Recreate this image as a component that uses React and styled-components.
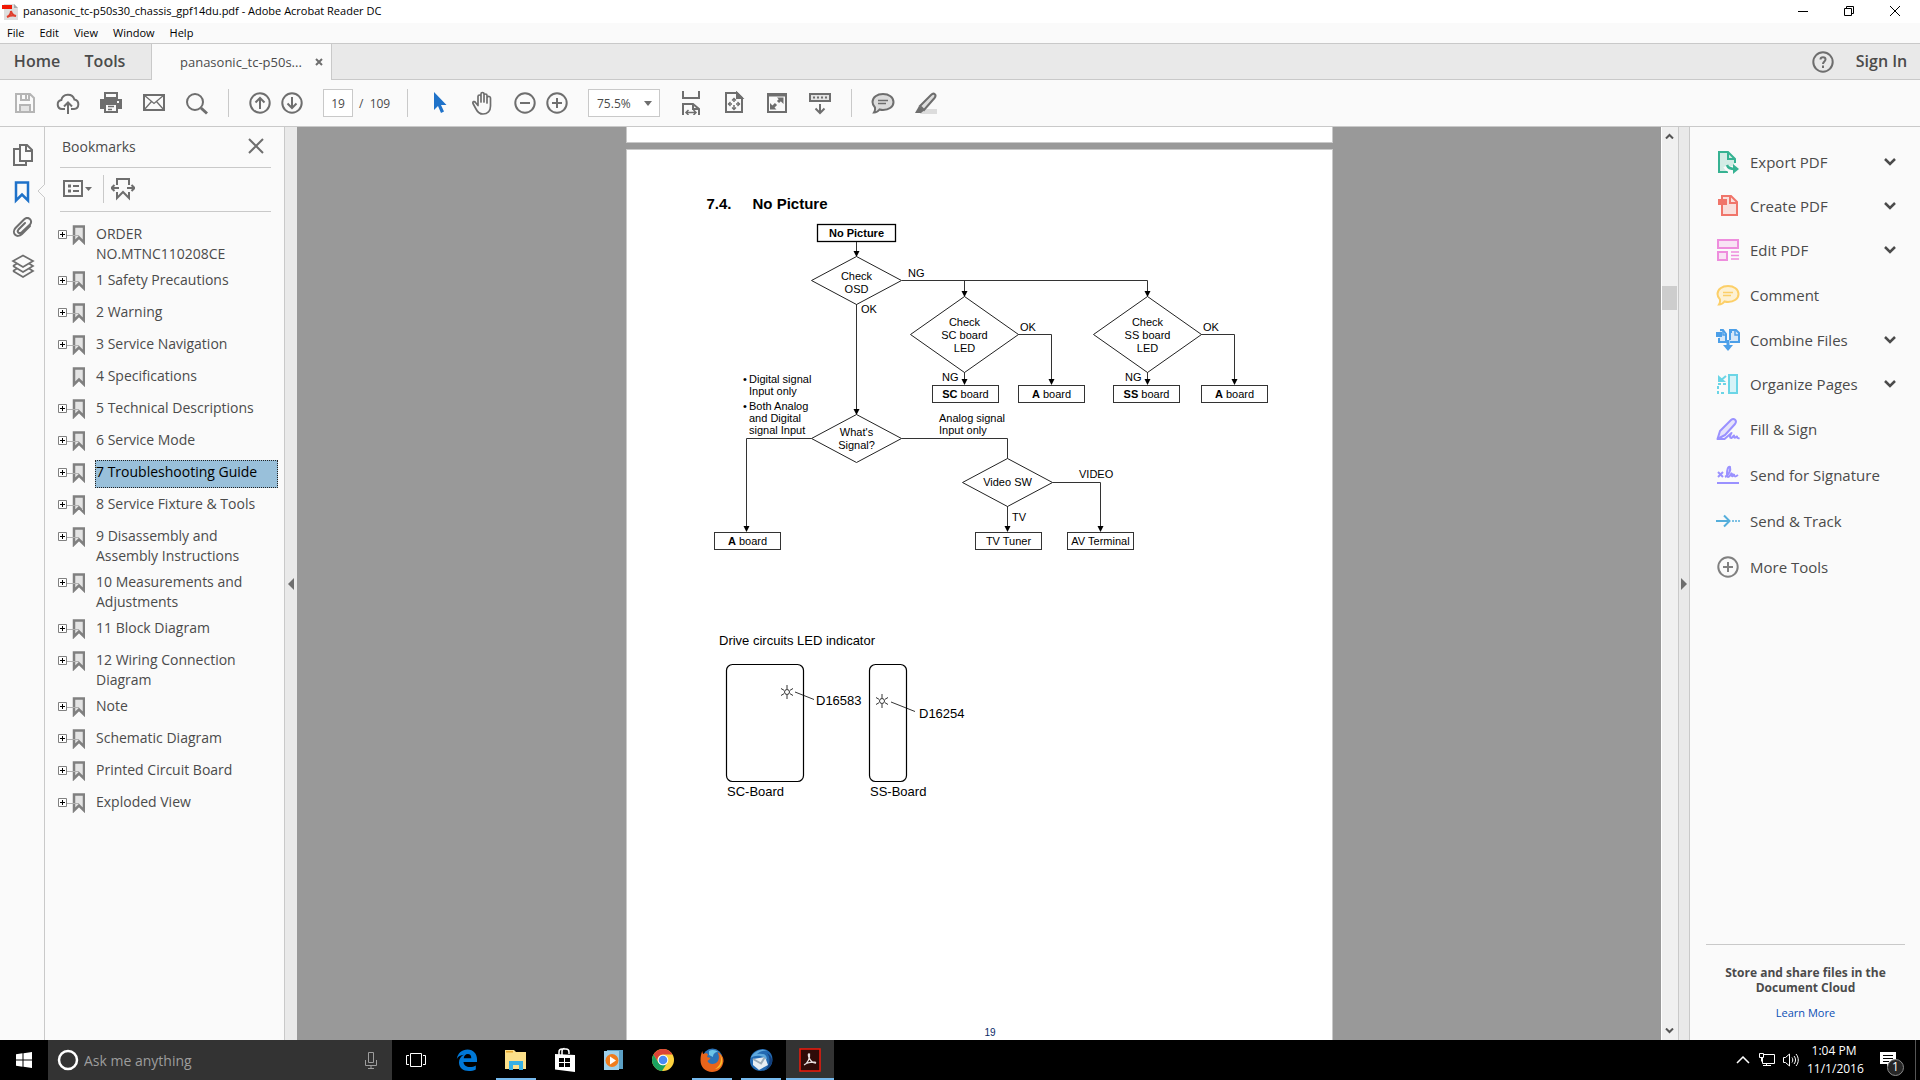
import React from 'react';
import styled, { createGlobalStyle } from 'styled-components';

const GlobalStyle = createGlobalStyle`
  * {
    box-sizing: border-box;
  }

  body {
    margin: 0;
    font-family: 'Open Sans', 'Noto Sans', sans-serif;
    font-size: 14px;
    color: #4b4b4b;
    background: #fafafa;
  }

  button, input, select {
    font-family: inherit;
    color: inherit;
  }

  svg {
    display: block;
    flex: none;
  }
`;

const Window = styled.div`
  display: flex;
  flex-direction: column;
  height: 100vh;
  overflow: hidden;
`;

/* title bar and menu */

const TitleBar = styled.header`
  display: flex;
  align-items: center;
  flex: none;
  height: 23px;
  padding: 0 2px;
  background: #fff;
  color: #000;
`;

const WindowTitle = styled.h1`
  flex: 1;
  margin: 0 0 2px 5px;
  font-size: 11px;
  font-weight: 400;
  line-height: 20px;
`;

const WindowButton = styled.button`
  display: flex;
  align-items: center;
  justify-content: center;
  width: 46px;
  height: 22px;
  padding: 0 0 2px;
  border: 0;
  background: none;
`;

const MenuBar = styled.nav`
  display: flex;
  align-items: flex-start;
  flex: none;
  gap: 15px;
  height: 20px;
  padding-left: 7px;
`;

const MenuItem = styled.button`
  padding: 0;
  border: 0;
  background: none;
  color: #000;
  font-size: 11px;
  line-height: 19px;
`;

/* tabs */

const TabBar = styled.div`
  display: flex;
  flex: none;
  height: 37px;
  background: #e9e9e9;
  border-top: 1px solid #c9c9c9;
  border-bottom: 1px solid #c9c9c9;
`;

const TabLink = styled.button`
  width: ${(props) => props.$width}px;
  padding: 0 0 2px;
  border: 0;
  background: none;
  font-size: 16px;
  font-weight: 600;
`;

const OpenTab = styled.div`
  display: flex;
  align-items: center;
  justify-content: space-between;
  width: 181px;
  height: 36px;
  margin-left: 15px;
  padding: 0 8px 1px 28px;
  background: #fafafa;
  border: solid #c9c9c9;
  border-width: 0 1px;
  font-size: 13px;
`;

const PlainButton = styled.button`
  display: flex;
  align-items: center;
  justify-content: center;
  width: ${(props) => props.$size || 24}px;
  height: ${(props) => props.$size || 24}px;
  padding: 0;
  border: 0;
  background: none;
  position: relative;
`;

const TabEnd = styled.div`
  display: flex;
  align-items: center;
  gap: 14px;
  margin-left: auto;
  padding-right: 6px;
`;

/* toolbar */

const Toolbar = styled.div`
  display: flex;
  align-items: center;
  flex: none;
  gap: 19px;
  height: 47px;
  padding-left: 13px;
  border-bottom: 1px solid #c9c9c9;
`;

const Pair = styled.div`
  display: flex;
  align-items: center;
  gap: 8px;
`;

const Separator = styled.span`
  width: 1px;
  height: 28px;
  background: #c9c9c9;
`;

const PageBox = styled.label`
  display: flex;
  align-items: center;
  gap: 6px;
  width: 65px;
  font-size: 12px;
  white-space: pre;
`;

const PageInput = styled.input`
  width: 30px;
  height: 28px;
  padding: 0;
  border: 1px solid #c9c9c9;
  background: #fff;
  font-size: 12px;
  text-align: center;
`;

const ZoomBox = styled.div`
  position: relative;

  svg {
    position: absolute;
    right: 8px;
    top: 12px;
    pointer-events: none;
  }
`;

const ZoomSelect = styled.select`
  display: block;
  width: 72px;
  height: 28px;
  padding: 0 8px;
  border: 1px solid #c9c9c9;
  border-radius: 0;
  background: #fff;
  font-size: 12px;
  appearance: none;
`;

/* left side */

const Workspace = styled.div`
  display: flex;
  flex: 1;
  min-height: 0;
`;

const Rail = styled.nav`
  display: flex;
  flex-direction: column;
  align-items: center;
  gap: 13px;
  flex: none;
  width: 45px;
  padding-top: 16px;
  padding-left: 2px;
  border-right: 1px solid #c9c9c9;
`;

const RailButton = styled(PlainButton)`
  svg.notch {
    position: absolute;
    left: 26px;
    top: 3px;
  }
`;

const BookmarkPanel = styled.aside`
  flex: none;
  width: 240px;
  border-right: 1px solid #c9c9c9;
`;

const PanelHeader = styled.div`
  display: flex;
  align-items: center;
  justify-content: space-between;
  height: 41px;
  margin: 0 13px 0 15px;
  padding: 0 3px 2px 2px;
  border-bottom: 1px solid #c9c9c9;
`;

const PanelTitle = styled.h2`
  margin: 0;
  font-size: 14px;
  font-weight: 400;
`;

const PanelTools = styled.div`
  display: flex;
  align-items: center;
  gap: 7px;
  height: 44px;
  margin: 0 13px 0 15px;
  padding: 0 0 1px 3px;
  border-bottom: 1px solid #c9c9c9;
`;

const OptionsButton = styled(PlainButton)`
  justify-content: flex-start;
  width: 33px;
`;

const Tree = styled.ul`
  margin: 0;
  padding: 10px 6px 0 13px;
  list-style: none;
`;

const TreeItem = styled.li`
  display: flex;
  align-items: flex-start;
  margin-bottom: 4px;
`;

const Expander = styled.button`
  width: 37px;
  padding: 3px 0 0;
  border: 0;
  background: none;
`;

const TreeLabel = styled.a`
  width: 183px;
  min-height: 28px;
  padding: 2px 0 0 1px;
  line-height: 20px;
  white-space: pre-line;
  text-decoration: none;
  color: ${(props) => (props.$selected ? '#000' : '#4b4b4b')};
  background: ${(props) => (props.$selected ? '#99c0da' : 'none')};
  outline: ${(props) => (props.$selected ? '1px dotted #222' : 'none')};
  outline-offset: -1px;
`;

const Splitter = styled.button`
  display: flex;
  align-items: center;
  justify-content: center;
  flex: none;
  width: ${(props) => (props.$bordered ? 11 : 12)}px;
  padding: 0;
  border: 0;
  border-right: ${(props) => (props.$bordered ? '1px solid #c9c9c9' : '0')};
  background: #e9e9e9;
`;

/* document */

const DocumentArea = styled.main`
  display: flex;
  flex: 1;
  flex-direction: column;
  align-items: center;
  gap: 6px;
  min-width: 0;
  overflow: hidden;
  background: #999;
`;

const PageEnd = styled.div`
  flex: none;
  width: 707px;
  height: 16px;
  background: #fff;
  border: solid #c9c9c9;
  border-width: 0 1px 1px;
`;

const Page = styled.article`
  display: flex;
  flex: 1;
  flex-direction: column;
  width: 707px;
  padding-left: 74px;
  background: #fff;
  border: solid #c9c9c9;
  border-width: 1px 1px 0;
  color: #000;
  font-family: 'Liberation Sans', Arial, sans-serif;
`;

const SectionTitle = styled.h2`
  display: flex;
  gap: 21px;
  margin: 44px 0 6px 6px;
  font-size: 15px;
  font-weight: 700;
  line-height: 20px;
`;

const Figures = styled.div`
  display: flex;
  flex-direction: column;
  gap: 60px;
`;

const PageNumber = styled.footer`
  margin: auto 52px 0 0;
  text-align: center;
  font-size: 10px;
  line-height: 14px;
  color: #0a2a66;
`;

const ScrollBar = styled.div`
  display: flex;
  flex-direction: column;
  flex: none;
  width: 18px;
  padding-right: 1px;
  border-left: 1px solid #fff;
  border-right: 1px solid #c9c9c9;
  background: #f0f0f0;
`;

const ScrollArrow = styled(PlainButton)`
  width: 15px;
  height: 18px;
`;

const ScrollGap = styled.div`
  flex: ${(props) => props.$grow};
`;

const ScrollThumb = styled.div`
  height: 24px;
  background: #cdcdcd;
`;

/* tools panel */

const ToolsPanel = styled.aside`
  display: flex;
  flex-direction: column;
  flex: none;
  width: 230px;
  padding-top: 13px;
`;

const ToolRow = styled.button`
  display: flex;
  align-items: center;
  gap: 10px;
  height: ${(props) => (props.$menu ? 44 : 46)}px;
  padding: 0 23px 0 26px;
  border: 0;
  background: none;
  font-size: 15px;
  text-align: left;
`;

const ToolName = styled.span`
  flex: 1;
`;

const CloudPromo = styled.div`
  margin: auto 15px 0 16px;
  padding: 20px 0 20px;
  border-top: 1px solid #c9c9c9;
  text-align: center;
  font-size: 12px;
  font-weight: 700;
  line-height: 15px;
`;

const PromoLink = styled.a`
  display: block;
  margin-top: 10px;
  font-size: 11px;
  font-weight: 400;
  color: #0a4fb4;
  text-decoration: none;
`;

/* taskbar */

const Taskbar = styled.footer`
  display: flex;
  flex: none;
  height: 40px;
  background: #000;
  color: #fff;
`;

const TaskButton = styled.button`
  display: flex;
  align-items: center;
  justify-content: center;
  width: 48px;
  margin-right: ${(props) => props.$after || 0}px;
  padding: 0;
  border: 0;
  background: ${(props) => (props.$active ? '#333' : 'none')};
  position: relative;

  &::after {
    content: '';
    position: absolute;
    bottom: 0;
    left: ${(props) => (props.$active ? 0 : 4)}px;
    right: ${(props) => (props.$active ? 0 : 4)}px;
    height: 2px;
    background: ${(props) => (props.$open ? '#76b9ed' : 'none')};
  }
`;

const SearchBox = styled.label`
  display: flex;
  align-items: center;
  gap: 5px;
  width: 344px;
  padding: 0 15px 0 9px;
  background: #333;
`;

const SearchInput = styled.input`
  flex: 1;
  min-width: 0;
  padding: 0;
  border: 0;
  background: none;
  font-size: 14px;

  &::placeholder {
    color: #9d9d9d;
    opacity: 1;
  }
`;

const Tray = styled.div`
  display: flex;
  align-items: center;
  margin-left: auto;
`;

const Clock = styled.time`
  width: 54px;
  margin-left: 4px;
  text-align: center;
  white-space: nowrap;
  font-size: 12px;
  line-height: 18px;
`;

const NotifyButton = styled(PlainButton)`
  width: 54px;
  height: 40px;
`;

const NotifyBadge = styled.span`
  position: absolute;
  left: 26px;
  top: 19px;
  width: 17px;
  height: 17px;
  border: 1px solid #8a8a8a;
  border-radius: 50%;
  background: #262626;
  color: #fff;
  font-size: 12px;
  line-height: 14px;
`;

const ShowDesktop = styled.span`
  align-self: stretch;
  width: 5px;
  border-left: 1px solid #555;
`;

const Icon = ({ w = 24, h = 24, children, ...rest }) => (
  <svg width={w} height={h} viewBox={`0 0 ${w} ${h}`} fill="none" stroke="#6e6e6e" strokeWidth="2" aria-hidden="true" {...rest}>
    {children}
  </svg>
);

const SaveIcon = () => (
  <Icon stroke="#b5b5b5">
    <path d="M3 3h14l4 4v14H3zM8 3v6h8V3M7 21v-7h10v7" />
    <path d="M13 4v4" />
    <path d="M8 15h8v5H8z" fill="#e4e4e4" stroke="none" />
  </Icon>
);

const CloudIcon = () => (
  <Icon>
    <path d="M9 18H6a4.500 4.500 0 0 1-.7-8.900A6.800 6.800 0 0 1 18.400 8.500 4.800 4.800 0 0 1 18 18h-3M12 23V12M8 15.500l4-4 4 4" />
  </Icon>
);

const PrintIcon = () => (
  <Icon>
    <path d="M5 1h14v7H5z" fill="#6e6e6e" stroke="none" />
    <path d="M7 3h10v3H7z" fill="#fafafa" stroke="none" />
    <path d="M1 8h22v10H1z" fill="#6e6e6e" stroke="none" />
    <path d="M18 11h2" stroke="#fafafa" />
    <path d="M6 13h12v8H6z" fill="#fafafa" />
    <path d="M9 15.500h6M9 18.500h4" strokeWidth="1.500" />
  </Icon>
);

const MailIcon = () => (
  <Icon>
    <path d="M2 4h20v15H2z" />
    <path d="M2 4l10 8.500L22 4M2 19l7.500-8.500M22 19l-7.500-8.500" strokeWidth="1.300" />
  </Icon>
);

const SearchIcon = () => (
  <Icon>
    <circle cx="10" cy="11" r="8" />
    <path d="M16 17l6 5.500" strokeWidth="3" />
  </Icon>
);

const CircleIcon = ({ d, ...rest }) => (
  <Icon {...rest}>
    <circle cx="12" cy="12" r="9.700" />
    <path d={d} />
  </Icon>
);

const PointerIcon = () => (
  <Icon stroke="none" fill="#1f72c9">
    <path d="M7 1v18l4-4 3 7 3-1.500-3-6.500h5.500z" />
  </Icon>
);

const HandIcon = () => (
  <Icon strokeWidth="1.700" strokeLinecap="round" strokeLinejoin="round">
    <path d="M8 12V5.500a1.500 1.500 0 0 1 3 0V3a1.500 1.500 0 0 1 3 0v1.500a1.500 1.500 0 0 1 3 0V7a1.500 1.500 0 0 1 3.500.5V15c0 5-3 8-7.500 8-4 0-5.500-2-7-5l-3-5.500c-.8-1.800 1.500-2.800 2.500-1L8 14.500zM11 5v6M14 5v6M17 6v6" />
  </Icon>
);

const FitWidthIcon = () => (
  <Icon>
    <path d="M4 0v7h16V0M4 24V13h10l6 5v6" />
    <path d="M14 13v5h6" />
    <path d="M7 21.500h10M9.500 19L7 21.500 9.500 24M14.500 19l2.500 2.500-2.500 2.500" strokeWidth="1.500" />
  </Icon>
);

const FitPageIcon = () => (
  <Icon>
    <path d="M4 2h11l5 5v14H4z" />
    <path d="M15 2v5h5z" fill="#6e6e6e" />
    <path d="M12 8v3M12 14v4M6.500 13H10M14 13h3.500" strokeWidth="1.500" />
    <path d="M10 9.500l2-2 2 2M10 16.500l2 2 2-2M8.500 11l-2 2 2 2M15.500 11l2 2-2 2" strokeWidth="1.300" />
  </Icon>
);

const FullScreenIcon = () => (
  <Icon>
    <path d="M3 3h18v18H3z" />
    <path d="M3 4h18" strokeWidth="3" />
    <path d="M8 16l3-3M13 11l3-3" strokeWidth="3" />
    <path d="M12 6.500h6.500V13zM5 12v6.500h6.500z" fill="#6e6e6e" stroke="none" />
  </Icon>
);

const KeyboardIcon = () => (
  <Icon>
    <path d="M2 3h20v7H2z" fill="#e4e4e4" />
    <path d="M5 6.500h14" strokeDasharray="2 2" />
    <path d="M12 13v9M7.500 17.500L12 22l4.500-4.500" />
  </Icon>
);

const CommentIcon = ({ color = '#6e6e6e', fill = '#dcdcdc' }) => (
  <Icon stroke={color}>
    <path d="M12 3c6 0 10.500 3.300 10.500 8S18 19 12 19c-1.500 0-2.500-.2-3.500-.5C7 20.500 5 21.500 3 21.500c1-1.500 1.300-3.500 1-5C2.500 15 1.500 13 1.500 11 1.500 6.300 6 3 12 3z" fill={fill} />
    <path d="M7 9.500h10M7 12.500h8" strokeWidth="1.300" />
  </Icon>
);

const HighlightIcon = () => (
  <Icon>
    <path d="M8 18h15v5H6z" fill="#dcdcdc" stroke="none" />
    <path d="M6 15L17 4c3-3 6 0 3.500 3L10 19z" fill="#dcdcdc" />
    <path d="M5 15l5 4.500L7 22H1z" fill="#6e6e6e" stroke="none" />
  </Icon>
);

const Caret = (props) => (
  <svg width="8" height="5" viewBox="0 0 8 5" aria-hidden="true" {...props}>
    <path d="M0 0h8L4 5z" fill="#6e6e6e" />
  </svg>
);

const CrossIcon = ({ size, width, color = '#6e6e6e' }) => (
  <Icon w={size} h={size} stroke={color} strokeWidth={width}>
    <path d={`M1 1L${size - 1} ${size - 1}M${size - 1} 1L1 ${size - 1}`} />
  </Icon>
);

const TreeIcon = ({ expandable }) => (
  <Icon w={27} h={20}>
    <path d="M16 1.500h10v16l-5-5-5 5z" fill="#e4e4e4" stroke="#808080" strokeWidth="2.500" />
    {expandable && (
      <>
        <path d="M9 10.500h12" stroke="#b0b0b0" strokeWidth="1" />
        <path d="M.5 5.500h8v8h-8z" fill="#fff" stroke="#808080" strokeWidth="1" />
        <path d="M2 9.500h5M4.500 7v5" stroke="#000" strokeWidth="1" />
      </>
    )}
  </Icon>
);

const TOOLS = [
  {
    name: 'Export PDF',
    menu: true,
    icon: (
      <Icon stroke="#36b292">
        <path d="M12 22H3V2h9l7 7v4" fill="#d3ece5" />
        <path d="M12 2v7h7" />
        <path d="M10 16c2 4 5 3 9 3" stroke="#fafafa" strokeWidth="6" />
        <path d="M11 15c1 3 4 4 8 4" strokeWidth="2.500" />
        <path d="M17 14l6 5-6 5z" fill="#36b292" stroke="none" />
      </Icon>
    ),
  },
  {
    name: 'Create PDF',
    menu: true,
    icon: (
      <Icon stroke="#f0756a">
        <path d="M6 2h9l6 6v13H6z" fill="#f9dfdc" />
        <path d="M14 2v7h7" />
        <path d="M2 5h9v6H2z" fill="#f0756a" stroke="none" />
      </Icon>
    ),
  },
  {
    name: 'Edit PDF',
    menu: true,
    icon: (
      <Icon stroke="#ee8ddd">
        <path d="M2 2h20v8H2zM2 14h9v8H2z" fill="#f8e3f4" />
        <path d="M15 14h8M15 17.500h8M15 21h8" strokeWidth="1.300" />
      </Icon>
    ),
  },
  { name: 'Comment', icon: <CommentIcon color="#fccf68" fill="#fdf1d3" /> },
  {
    name: 'Combine Files',
    menu: true,
    icon: (
      <Icon stroke="#4c9fe8">
        <path d="M3 10v4h7V6L7 2H4M14 14h9V5l-3-3h-6v10" fill="#d5e7f8" />
        <path d="M19 2v5h4M7 2v5h3" strokeWidth="1.500" />
        <path d="M0 4h6v5H0zM13 1h3v4h-3z" fill="#4c9fe8" stroke="none" />
        <path d="M12 12v9" strokeWidth="3" />
        <path d="M7 17h10l-5 6z" fill="#4c9fe8" stroke="none" />
      </Icon>
    ),
  },
  {
    name: 'Organize Pages',
    menu: true,
    icon: (
      <Icon stroke="#6bd5e6">
        <path d="M13 3h8v18h-8z" fill="#d6f3f8" />
        <path d="M10 12H2v9h8" strokeDasharray="3 2" />
        <path d="M10 4L4 9" />
        <path d="M2 3v7h8z" fill="#6bd5e6" stroke="none" />
      </Icon>
    ),
  },
  {
    name: 'Fill & Sign',
    icon: (
      <Icon stroke="#9a91ff" strokeLinejoin="round">
        <path d="M1.500 22L4 14 15 3c3-2.500 6.500.5 4 4L9 18z" fill="#e6e3fb" />
        <path d="M1.500 22h7l7-6c-2 3-2 5 0 5l2.500-2.500c-.5 2 .5 3 2 1.500l1-.5c0 1.500 1 2 2.500 1.500" />
      </Icon>
    ),
  },
  {
    name: 'Send for Signature',
    icon: (
      <Icon stroke="#9a91ff">
        <path d="M1 20h22M2 9l5 5M7 9l-5 5" />
        <path d="M9 14c4-2 6-7 5-10-2-1-3 3-3 7s2 4 4 0l1-1c-1 3 0 5 2 1 0 3 1 3 4 1" />
      </Icon>
    ),
  },
  {
    name: 'Send & Track',
    icon: (
      <Icon stroke="#55aedb">
        <path d="M0 12h12M8 6.500l5.500 5.500L8 17.500" />
        <path d="M16 12h8" strokeDasharray="2 1" strokeWidth="1.500" />
      </Icon>
    ),
  },
  { name: 'More Tools', icon: <CircleIcon d="M12 7v10M7 12h10" stroke="#808080" /> },
];

const BOOKMARKS = [
  { title: 'ORDER\nNO.MTNC110208CE' },
  { title: '1 Safety Precautions' },
  { title: '2 Warning' },
  { title: '3 Service Navigation' },
  { title: '4 Specifications', leaf: true },
  { title: '5 Technical Descriptions' },
  { title: '6 Service Mode' },
  { title: '7 Troubleshooting Guide', selected: true },
  { title: '8 Service Fixture & Tools' },
  { title: '9 Disassembly and\nAssembly Instructions' },
  { title: '10 Measurements and\nAdjustments' },
  { title: '11 Block Diagram' },
  { title: '12 Wiring Connection\nDiagram' },
  { title: 'Note' },
  { title: 'Schematic Diagram' },
  { title: 'Printed Circuit Board' },
  { title: 'Exploded View' },
];

// flowchart parts

const Box = ({ x, y, w = 66, bold, children, heavy }) => (
  <>
    <rect x={x} y={y} width={w} height="17" fill="none" stroke={heavy ? '#000' : '#333'} strokeWidth={heavy ? 1.3 : 1} />
    <text x={x + w / 2} y={y + 12.5} textAnchor="middle">
      {bold && <tspan fontWeight="700">{bold}</tspan>}
      {children}
    </text>
  </>
);

const Diamond = ({ cx, cy, rx, ry, lines, first }) => (
  <>
    <path d={`M${cx - rx} ${cy}L${cx} ${cy - ry}L${cx + rx} ${cy}L${cx} ${cy + ry}z`} fill="none" stroke="#222" />
    {lines.map((line, i) => (
      <text key={line} x={cx} y={first + i * 13} textAnchor="middle">{line}</text>
    ))}
  </>
);

const Arrow = ({ d, x, y }) => (
  <>
    <path d={d} fill="none" stroke="#333" />
    <path d={`M${x - 3} ${y - 6}h6l-3 6z`} />
  </>
);

const Flowchart = () => (
  <svg width="600" height="340" viewBox="0 0 600 340" fontSize="11" role="img" aria-label="No picture flowchart">
    <Box x={116.5} y={4.5} w={78} bold="No Picture" heavy />
    <Arrow d="M155.500 22v14" x={155.5} y={37} />
    <Diamond cx={155.5} cy={60.5} rx={45} ry={24} lines={['Check', 'OSD']} first={60} />
    <text x="207" y="57">NG</text>
    <text x="160" y="93">OK</text>
    <path d="M201 60.500h245.500" fill="none" stroke="#333" />
    <Arrow d="M155.500 84v108" x={155.5} y={195} />
    <Arrow d="M263.500 60.500v13" x={263.5} y={77} />
    <Arrow d="M446.500 60.500v13" x={446.5} y={77} />

    <Diamond cx={263.5} cy={114.5} rx={54} ry={38} lines={['Check', 'SC board', 'LED']} first={106} />
    <Diamond cx={446.5} cy={114.5} rx={54} ry={38} lines={['Check', 'SS board', 'LED']} first={106} />
    <text x="319" y="111">OK</text>
    <text x="502" y="111">OK</text>
    <text x="241" y="161">NG</text>
    <text x="424" y="161">NG</text>
    <Arrow d="M263.500 152v9" x={263.5} y={165} />
    <Arrow d="M446.500 152v9" x={446.5} y={165} />
    <Arrow d="M317 114.500h33.500v48" x={350.5} y={165} />
    <Arrow d="M500 114.500h33.500v48" x={533.5} y={165} />
    <Box x={231.5} y={165.5} bold="SC"> board</Box>
    <Box x={317.5} y={165.5} bold="A"> board</Box>
    <Box x={412.5} y={165.5} bold="SS"> board</Box>
    <Box x={500.5} y={165.5} bold="A"> board</Box>

    <text x="42" y="163">•</text>
    <text x="48" y="163">Digital signal</text>
    <text x="48" y="175">Input only</text>
    <text x="42" y="190">•</text>
    <text x="48" y="190">Both Analog</text>
    <text x="48" y="202">and Digital</text>
    <text x="48" y="214">signal Input</text>
    <text x="238" y="202">Analog signal</text>
    <text x="238" y="214">Input only</text>

    <Diamond cx={155.5} cy={218.5} rx={45} ry={24} lines={["What's", 'Signal?']} first={216} />
    <Arrow d="M110.500 218.500h-65v90" x={45.5} y={312} />
    <path d="M200.500 218.500h106v20" fill="none" stroke="#333" />
    <Diamond cx={306.5} cy={262.5} rx={45} ry={24} lines={['Video SW']} first={266} />
    <Arrow d="M306.500 286v22" x={306.5} y={312} />
    <Arrow d="M351.500 262.500h48v46" x={399.5} y={312} />
    <text x="311" y="301">TV</text>
    <text x="378" y="258">VIDEO</text>
    <Box x={13.5} y={312.5} bold="A"> board</Box>
    <Box x={274.5} y={312.5}>TV Tuner</Box>
    <Box x={366.5} y={312.5}>AV Terminal</Box>
  </svg>
);

const Led = ({ x, y }) => (
  <g transform={`translate(${x} ${y})`} fill="none" stroke="#000" strokeWidth=".8">
    <circle r="2.500" />
    <path d="M0-7v4M0 3v4M-6-3.500l3 1.800M6-3.500l-3 1.800M-6 3.500l3-1.800M6 3.500l-3-1.800" />
  </g>
);

const LedDrawing = () => (
  <svg width="300" height="190" viewBox="0 0 300 190" fontSize="13" role="img" aria-label="LED positions on the drive boards">
    <text x="18" y="25">Drive circuits LED indicator</text>
    <g fill="none" stroke="#000" strokeWidth="1.200">
      <rect x="25.500" y="44.500" width="77" height="117" rx="6" />
      <rect x="168.500" y="44.500" width="37" height="117" rx="6" />
    </g>
    <Led x={86} y={72} />
    <Led x={181} y={81} />
    <path d="M94 72l19 7.500M190 82l24 9.500" stroke="#000" strokeWidth=".8" />
    <text x="115" y="85">D16583</text>
    <text x="218" y="98">D16254</text>
    <text x="26" y="176">SC-Board</text>
    <text x="169" y="176">SS-Board</text>
  </svg>
);

// taskbar logos

const WindowsLogo = () => (
  <Icon w={16} h={16} stroke="none" fill="#fff">
    <path d="M0 2.200L6.500 1.300v6.200H0zM7.500 1.200L16 0v7.500H7.500zM0 8.500h6.500v6.200L0 13.800zM7.500 8.500H16V16l-8.500-1.200z" />
  </Icon>
);

const EdgeLogo = () => (
  <Icon w={22} h={22} stroke="none" fill="#0078d7">
    <path d="M.8 10C1.800 4 6 .5 11.500.5 17.500.5 21 5 21 10v3H7.500c0 3 3 5 6.500 5 2.300 0 4-.5 5.800-1.500v4c-2 1-4.300 1.500-6.800 1.500-6 0-10-3.500-10-8.500 0-3.500 1.800-6.300 5-7.800C4.500 6 2 7.500.8 10zM7.700 9.300h7.600c0-3-1.300-4.300-3.500-4.300-2.300 0-3.800 1.600-4.100 4.300z" />
  </Icon>
);

const ExplorerLogo = () => (
  <Icon w={22} h={22} stroke="none">
    <path d="M0 1h9l2 2h10v17H0z" fill="#fce08a" />
    <path d="M1 2h7v1.500H1z" fill="#e8a82e" />
    <path d="M4 12h14v9h-4v-5H8v5H4z" fill="#36b0e4" />
  </Icon>
);

const StoreLogo = () => (
  <Icon w={22} h={26} stroke="#fff" strokeWidth="1.500">
    <path d="M5 8V5c0-2 1-3 3-3h4c2 0 3 1 3 3v2M8 8V4c0-1.500 1-2.500 2.500-2.500" />
    <path d="M1 7l20 1v17L1 22.500z" fill="#fff" stroke="none" />
    <path d="M5 11h5v4H5zM11 11h5v4h-5zM5 16h5v4H5zM11 16h5v4h-5z" fill="#000" stroke="none" />
  </Icon>
);

const MediaLogo = () => (
  <Icon w={22} h={22} stroke="none">
    <path d="M4 1h16v19H4z" fill="#5b9fc4" />
    <path d="M1 2h15v19H1z" fill="#9fd0ea" />
    <circle cx="9" cy="11.500" r="6.500" fill="#f07c1c" />
    <path d="M7 7.500l6 4-6 4z" fill="#fff" />
  </Icon>
);

const ChromeLogo = () => (
  <Icon w={22} h={22} stroke="none">
    <circle cx="11" cy="11" r="11" fill="#fdd23e" />
    <path d="M1.500 5.500A11 11 0 0 1 20.500 5.500H11a5.500 5.500 0 0 0-5.200 7.500z" fill="#dc4437" />
    <path d="M1.500 5.500A11 11 0 0 0 10 22l4.500-7A5.500 5.500 0 0 1 6 13z" fill="#1aa15f" />
    <circle cx="11" cy="11" r="5.300" fill="#fff" />
    <circle cx="11" cy="11" r="4.300" fill="#4b8bf4" />
  </Icon>
);

const FirefoxLogo = () => (
  <Icon w={24} h={24} stroke="none">
    <circle cx="12.500" cy="10.500" r="10" fill="#2b73b8" />
    <path d="M9 3c3-2 7-1 9 1-3 0-5 2-5 5l-4-2z" fill="#6cc5e8" />
    <path d="M2.500 3c0 1.500 0 2 .8 3C5 5 7 5 8 6.500L7 9c1 .5 3 .2 3.500 1.200C9.500 12 8 12 7.500 13c1.500 4 8 4 10.500 0 1.500-3 1-6-.5-9C22 6.500 24 10 23.500 13.500 22.500 20 18 24 12 24 5.500 24 .5 19 .5 12.500.5 8.500 1.200 5 2.500 3z" fill="#e8641b" />
    <path d="M18.500 4.500C23 10 21 18 15 21c7-.5 10.500-9 3.500-16.500z" fill="#f9bd2c" />
  </Icon>
);

const ThunderbirdLogo = () => (
  <Icon w={24} h={24} stroke="none">
    <path d="M1.500 10C3 3 12-1 18 2c6 3 7 11 3.500 16-4 6-14 7-18.500 1-2-2.500-2.500-6-1.500-9z" fill="#2369b1" />
    <path d="M4 11l12-2 3 8-9 5-6-5z" fill="#e7edf2" />
    <path d="M4 11l8 4.500L16 9" fill="none" stroke="#9aabb8" />
    <path d="M1.500 10C5 3 12 0 18 2.500c-6 0-8 1.500-10 3.500 6-1 10 0 10 6-3-4.500-11-6-16.500-2z" fill="#5fa9dd" />
    <path d="M18 5c4 5 3 12-2 17 8-3 10-12 2-17z" fill="#123f7c" />
  </Icon>
);

const AcrobatLogo = () => (
  <Icon w={22} h={24} stroke="#f21b0c" strokeWidth="1.500">
    <path d="M1 1h20v22H1z" fill="#2f0b08" />
    <path d="M5 17c4-2 6-7 5.500-11-1.500-1-1.500 2 0 4.500 1.500 3 3.500 4.500 6 4.500 1-1.500-6-1-9.500.5" stroke="#e6dedd" strokeWidth="1.300" />
  </Icon>
);

const PdfFileIcon = () => (
  <Icon w={16} h={16} stroke="none">
    <path d="M2 0h10l4 4v12H2z" fill="#dedede" />
    <path d="M12 0l4 4h-4z" fill="#a8a8a8" />
    <path d="M0 1h10v4H0z" fill="#f01805" />
    <path d="M5 13c3-1.500 4-3 4-6 .5 3 2 4.500 5 5-3-.8-6-.4-9 1z" stroke="#e0402e" />
  </Icon>
);

const APPS = [
  { name: 'Edge', logo: <EdgeLogo /> },
  { name: 'File Explorer', logo: <ExplorerLogo />, open: true },
  { name: 'Store', logo: <StoreLogo /> },
  { name: 'Media Player', logo: <MediaLogo /> },
  { name: 'Chrome', logo: <ChromeLogo /> },
  { name: 'Firefox', logo: <FirefoxLogo />, open: true },
  { name: 'Thunderbird', logo: <ThunderbirdLogo />, open: true },
  { name: 'Acrobat Reader', logo: <AcrobatLogo />, open: true, active: true },
];

const TopBars = () => (
  <>
    <TitleBar>
      <PdfFileIcon />
      <WindowTitle>panasonic_tc-p50s30_chassis_gpf14du.pdf - Adobe Acrobat Reader DC</WindowTitle>
      <WindowButton aria-label="Minimize">
        <Icon w={10} h={10} stroke="#000" strokeWidth="1"><path d="M0 5.500h10" /></Icon>
      </WindowButton>
      <WindowButton aria-label="Restore">
        <Icon w={10} h={10} stroke="#000" strokeWidth="1"><path d="M.5 2.500h7v7h-7zM2.500 2.500v-2h7v7h-2" /></Icon>
      </WindowButton>
      <WindowButton aria-label="Close"><CrossIcon size={12} width="1" color="#000" /></WindowButton>
    </TitleBar>
    <MenuBar>
      {['File', 'Edit', 'View', 'Window', 'Help'].map((item) => (
        <MenuItem key={item}>{item}</MenuItem>
      ))}
    </MenuBar>
    <TabBar>
      <TabLink $width={74}>Home</TabLink>
      <TabLink $width={62}>Tools</TabLink>
      <OpenTab>
        <span>panasonic_tc-p50s...</span>
        <PlainButton $size={8} aria-label="Close tab"><CrossIcon size={8} width="2" /></PlainButton>
      </OpenTab>
      <TabEnd>
        <PlainButton aria-label="Help">
          <Icon>
            <circle cx="12" cy="12" r="9.700" />
            <path d="M9.500 9.500c0-3 5-3 5 0 0 2-2.500 2-2.500 4.500M12 15.500V18" />
          </Icon>
        </PlainButton>
        <TabLink $width={65}>Sign In</TabLink>
      </TabEnd>
    </TabBar>
  </>
);

const ReaderToolbar = () => (
  <Toolbar>
    <PlainButton aria-label="Save"><SaveIcon /></PlainButton>
    <PlainButton aria-label="Upload"><CloudIcon /></PlainButton>
    <PlainButton aria-label="Print"><PrintIcon /></PlainButton>
    <PlainButton aria-label="Email"><MailIcon /></PlainButton>
    <PlainButton aria-label="Find"><SearchIcon /></PlainButton>
    <Separator />
    <Pair>
      <PlainButton aria-label="Previous page"><CircleIcon d="M12 18V7M7.500 11.500L12 7l4.500 4.500" /></PlainButton>
      <PlainButton aria-label="Next page"><CircleIcon d="M12 6v11M7.500 12.500L12 17l4.500-4.500" /></PlainButton>
    </Pair>
    <PageBox>
      <PageInput defaultValue="19" aria-label="Page number" />
      <span>/  109</span>
    </PageBox>
    <Separator />
    <PlainButton aria-label="Select"><PointerIcon /></PlainButton>
    <PlainButton aria-label="Pan"><HandIcon /></PlainButton>
    <Pair>
      <PlainButton aria-label="Zoom out"><CircleIcon d="M7 12h10" /></PlainButton>
      <PlainButton aria-label="Zoom in"><CircleIcon d="M12 7v10M7 12h10" /></PlainButton>
    </Pair>
    <ZoomBox>
      <ZoomSelect aria-label="Zoom level"><option>75.5%</option></ZoomSelect>
      <Caret />
    </ZoomBox>
    <PlainButton aria-label="Fit width"><FitWidthIcon /></PlainButton>
    <PlainButton aria-label="Fit page"><FitPageIcon /></PlainButton>
    <PlainButton aria-label="Full screen"><FullScreenIcon /></PlainButton>
    <PlainButton aria-label="Read mode"><KeyboardIcon /></PlainButton>
    <Separator />
    <PlainButton aria-label="Add comment"><CommentIcon /></PlainButton>
    <PlainButton aria-label="Highlight"><HighlightIcon /></PlainButton>
  </Toolbar>
);

const Sidebar = () => (
  <>
    <Rail>
      <RailButton aria-label="Pages">
        <Icon>
          <path d="M9 6H3v16h12v-4" />
          <path d="M9 2h7l5 5v11H9z" fill="#fafafa" />
          <path d="M15 2v6h6" />
        </Icon>
      </RailButton>
      <RailButton aria-label="Bookmarks">
        <Icon stroke="#1f72c9" strokeWidth="2.500"><path d="M5 2.500h12v18l-6-6-6 6z" /></Icon>
        <Icon className="notch" w={8} h={16} stroke="#c9c9c9" strokeWidth="1">
          <path d="M8 1v14L1 8z" fill="#fafafa" stroke="none" />
          <path d="M7.500 1v.5L1 8l6.500 6.500v.5" />
        </Icon>
      </RailButton>
      <RailButton aria-label="Attachments">
        <Icon strokeLinecap="round">
          <path d="M19 9l-8 8c-5 5-11-1-6.500-6L13 2.500c4-4 9.500 1 6 5L11 15c-3 2.500-5.500 0-3.500-2.500L14 6" />
        </Icon>
      </RailButton>
      <RailButton aria-label="Layers">
        <Icon strokeWidth="1.700">
          <path d="M2 17l10 6 10-6-4-2.500M6 14.500L2 17" />
          <path d="M2 12l10 6 10-6-4-2.500M6 9.500L2 12" />
          <path d="M12 1.500L22 7l-10 6L2 7z" fill="#fafafa" />
        </Icon>
      </RailButton>
    </Rail>
    <BookmarkPanel>
      <PanelHeader>
        <PanelTitle>Bookmarks</PanelTitle>
        <PlainButton $size={24} aria-label="Close panel"><CrossIcon size={16} width="2" /></PlainButton>
      </PanelHeader>
      <PanelTools>
        <OptionsButton aria-label="Options">
          <Icon w={30} h={18}>
            <path d="M1 1h18v15H1z" />
            <path d="M5 6h3M5 11h3" strokeWidth="3" />
            <path d="M10 6h6M10 11h6" />
            <path d="M22 7h7l-3.500 4z" fill="#6e6e6e" stroke="none" />
          </Icon>
        </OptionsButton>
        <Separator />
        <PlainButton aria-label="Find current bookmark">
          <Icon>
            <path d="M6 8V2h12v6M6 15v6l6-6 6 6v-6M0 11h8M16 11h8" />
            <path d="M3.500 8L.5 11l3 3M20.500 8l3 3-3 3" />
          </Icon>
        </PlainButton>
      </PanelTools>
      <Tree>
        {BOOKMARKS.map(({ title, leaf, selected }) => (
          <TreeItem key={title}>
            <Expander aria-label={`Expand ${title}`} disabled={leaf}><TreeIcon expandable={!leaf} /></Expander>
            <TreeLabel href="#" $selected={selected}>{title}</TreeLabel>
          </TreeItem>
        ))}
      </Tree>
    </BookmarkPanel>
    <Splitter aria-label="Hide bookmarks">
      <Icon w={6} h={12} stroke="none" fill="#6e6e6e"><path d="M6 0v12L0 6z" /></Icon>
    </Splitter>
  </>
);

const Document = () => (
  <>
    <DocumentArea>
      <PageEnd />
      <Page>
        <SectionTitle><span>7.4.</span><span>No Picture</span></SectionTitle>
        <Figures>
          <Flowchart />
          <LedDrawing />
        </Figures>
        <PageNumber>19</PageNumber>
      </Page>
    </DocumentArea>
    <ScrollBar>
      <ScrollArrow aria-label="Scroll up">
        <Icon w={9} h={6} stroke="#555"><path d="M1 5.500l3.500-3.500L8 5.500" /></Icon>
      </ScrollArrow>
      <ScrollGap $grow={141} />
      <ScrollThumb />
      <ScrollGap $grow={712} />
      <ScrollArrow aria-label="Scroll down">
        <Icon w={9} h={6} stroke="#555"><path d="M1 .5L4.500 4 8 .5" /></Icon>
      </ScrollArrow>
    </ScrollBar>
  </>
);

const ToolsPane = () => (
  <>
    <Splitter $bordered aria-label="Hide tools">
      <Icon w={6} h={12} stroke="none" fill="#6e6e6e"><path d="M0 0v12l6-6z" /></Icon>
    </Splitter>
    <ToolsPanel>
      {TOOLS.map(({ name, icon, menu }) => (
        <ToolRow key={name} $menu={menu}>
          {icon}
          <ToolName>{name}</ToolName>
          {menu && <Icon w={14} h={10} stroke="#4b4b4b" strokeWidth="2.500"><path d="M2 2l5 5 5-5" /></Icon>}
        </ToolRow>
      ))}
      <CloudPromo>
        Store and share files in the Document Cloud
        <PromoLink href="#">Learn More</PromoLink>
      </CloudPromo>
    </ToolsPanel>
  </>
);

const WindowsTaskbar = () => (
  <Taskbar>
    <TaskButton aria-label="Start"><WindowsLogo /></TaskButton>
    <SearchBox>
      <Icon w={22} h={22} stroke="#fff" strokeWidth="2.500"><circle cx="11" cy="11" r="9" /></Icon>
      <SearchInput placeholder="Ask me anything" aria-label="Search" />
      <Icon w={12} h={18} stroke="#9d9d9d" strokeWidth="1">
        <path d="M3.500 1.500h5v10h-5zM.5 9v5.500h11V9M6 14.500v3M3 17.500h6" />
      </Icon>
    </SearchBox>
    <TaskButton $after={3} aria-label="Task view">
      <Icon w={22} h={16} stroke="#fff" strokeWidth="1">
        <path d="M5.500 1.500h11v13h-11zM4 3.500H1.500v9H4M18 3.500h2.500v9H18" />
      </Icon>
    </TaskButton>
    {APPS.map(({ name, logo, open, active }) => (
      <TaskButton key={name} $after={1} $open={open} $active={active} aria-label={name}>{logo}</TaskButton>
    ))}
    <Tray>
      <PlainButton aria-label="Show hidden icons">
        <Icon w={14} h={8} stroke="#fff" strokeWidth="1.500"><path d="M1 7l6-6 6 6" /></Icon>
      </PlainButton>
      <PlainButton aria-label="Network">
        <Icon w={18} h={16} stroke="#fff" strokeWidth="1">
          <path d="M6 2.500h10.500v9H4.500V6M8.500 11.500v2M5 13.500h8M1.500 1.500h4v4h-4zM3.500 5.500v4" />
        </Icon>
      </PlainButton>
      <PlainButton aria-label="Volume">
        <Icon w={18} h={16} stroke="#fff" strokeWidth="1">
          <path d="M1.500 5.500h2l4-3.500v12l-4-3.500h-2zM10 5.500c1 1.500 1 3.500 0 5M12 4c2 2.500 2 5.500 0 8M14 2c3 3.500 3 8.500 0 12" />
        </Icon>
      </PlainButton>
      <Clock>1:04 PM<br />11/1/2016</Clock>
      <NotifyButton aria-label="1 notification">
        <Icon w={16} h={16} stroke="none">
          <path d="M0 0h16v12h-6l-3 3v-3H0z" fill="#fff" />
          <path d="M3 3.500h10M3 6.500h10M3 9.500h6" stroke="#000" strokeWidth="1" />
        </Icon>
        <NotifyBadge>1</NotifyBadge>
      </NotifyButton>
      <ShowDesktop />
    </Tray>
  </Taskbar>
);

const App = () => (
  <Window>
    <GlobalStyle />
    <TopBars />
    <ReaderToolbar />
    <Workspace>
      <Sidebar />
      <Document />
      <ToolsPane />
    </Workspace>
    <WindowsTaskbar />
  </Window>
);

export default App;
